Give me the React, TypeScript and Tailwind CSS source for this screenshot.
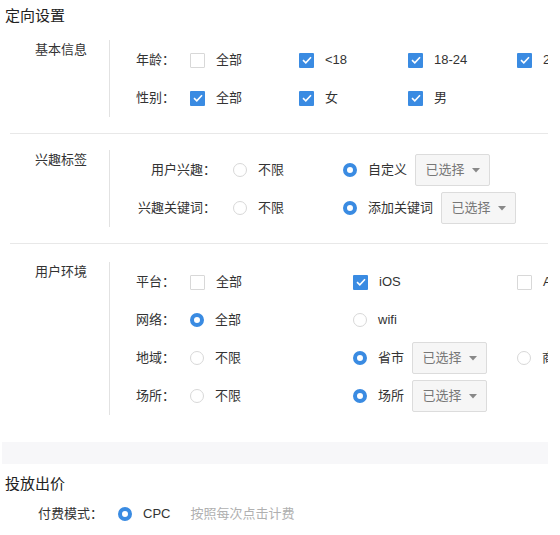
import type { ReactNode } from 'react';

function Check({ on }: { on?: boolean }) {
  if (on) {
    return (
      <span className="flex h-[15px] w-[15px] shrink-0 items-center justify-center rounded-[1px] bg-[#3a8be2]">
        <svg width="10" height="8" viewBox="0 0 10 8" fill="none">
          <path d="M1 4.2L3.8 6.8L9 1.2" stroke="white" strokeWidth="1.6" />
        </svg>
      </span>
    );
  }
  return <span className="h-[15px] w-[15px] shrink-0 rounded-[1px] border border-[#d8d8d8] bg-white" />;
}

function Radio({ on }: { on?: boolean }) {
  if (on) {
    return <span className="h-[14px] w-[14px] shrink-0 rounded-full border-[4px] border-[#3a8be2] bg-white" />;
  }
  return <span className="h-[14px] w-[14px] shrink-0 rounded-full border border-[#d8d8d8] bg-white" />;
}

function Opt({ kind, on, text, w, children }: { kind: 'c' | 'r'; on?: boolean; text: string; w?: string; children?: ReactNode }) {
  return (
    <div className={`flex shrink-0 items-center gap-[11px] ${w ?? ''}`}>
      {kind === 'c' ? <Check on={on} /> : <Radio on={on} />}
      <span className="whitespace-nowrap">{text}</span>
      {children}
    </div>
  );
}

function Picker() {
  return (
    <button className="-ml-[3px] flex h-[32px] w-[75px] items-center justify-center gap-[7px] rounded-[2px] border border-[#dcdcdc] bg-[#f6f6f6] text-[13px] text-[#777]">
      已选择
      <svg width="8" height="5" viewBox="0 0 8 5">
        <path d="M0 0H8L4 4.5Z" fill="#888" />
      </svg>
    </button>
  );
}

function Section({ title, top, children }: { title: string; top: string; children: ReactNode }) {
  return (
    <div className={`flex ${top}`}>
      <div className="w-[109px] shrink-0 pl-[35px] leading-[20px]">{title}</div>
      <div className="flex-1 border-l border-[#e2e2e2] pt-[1px]">{children}</div>
    </div>
  );
}

function Row({ label, lw, children }: { label: string; lw: string; children: ReactNode }) {
  return (
    <div className="flex h-[38px] items-center">
      <div className={`shrink-0 whitespace-nowrap ${lw}`}>{label}</div>
      {children}
    </div>
  );
}

export default function App() {
  return (
    <div
      className="h-[535px] w-[560px] overflow-hidden bg-white text-[13px] text-[#333]"
      style={{ fontFamily: '"Liberation Sans", "Noto Sans CJK SC", sans-serif' }}
    >
      <div className="w-[548px] overflow-hidden">
        <div className="flex h-[32px] items-center pl-[5px] text-[15px] text-[#222]">定向设置</div>

        <Section title="基本信息" top="mt-[8px]">
          <Row label="年龄：" lw="w-[80px] pl-[26px]">
            <Opt kind="c" text="全部" w="w-[109px]" />
            <Opt kind="c" on text="<18" w="w-[109px]" />
            <Opt kind="c" on text="18-24" w="w-[109px]" />
            <Opt kind="c" on text="25-30" />
          </Row>
          <Row label="性别：" lw="w-[80px] pl-[26px]">
            <Opt kind="c" on text="全部" w="w-[109px]" />
            <Opt kind="c" on text="女" w="w-[109px]" />
            <Opt kind="c" on text="男" w="w-[109px]" />
          </Row>
        </Section>

        <div className="ml-[10px] mt-[16px] h-px bg-[#e8e8e8]" />

        <Section title="兴趣标签" top="mt-[16px]">
          <Row label="用户兴趣：" lw="w-[123px] pr-[17px] text-right">
            <Opt kind="r" text="不限" w="w-[110px]" />
            <Opt kind="r" on text="自定义">
              <Picker />
            </Opt>
          </Row>
          <Row label="兴趣关键词：" lw="w-[123px] pr-[17px] text-right">
            <Opt kind="r" text="不限" w="w-[110px]" />
            <Opt kind="r" on text="添加关键词">
              <Picker />
            </Opt>
          </Row>
        </Section>

        <div className="ml-[10px] mt-[16px] h-px bg-[#e8e8e8]" />

        <Section title="用户环境" top="mt-[18px]">
          <Row label="平台：" lw="w-[80px] pl-[26px]">
            <Opt kind="c" text="全部" w="w-[163px]" />
            <Opt kind="c" on text="iOS" w="w-[164px]" />
            <Opt kind="c" text="Android" />
          </Row>
          <Row label="网络：" lw="w-[80px] pl-[26px]">
            <Opt kind="r" on text="全部" w="w-[163px]" />
            <Opt kind="r" text="wifi" w="w-[164px]" />
          </Row>
          <Row label="地域：" lw="w-[80px] pl-[26px]">
            <Opt kind="r" text="不限" w="w-[163px]" />
            <Opt kind="r" on text="省市" w="w-[164px]">
              <Picker />
            </Opt>
            <Opt kind="r" text="商圈" />
          </Row>
          <Row label="场所：" lw="w-[80px] pl-[26px]">
            <Opt kind="r" text="不限" w="w-[163px]" />
            <Opt kind="r" on text="场所" w="w-[164px]">
              <Picker />
            </Opt>
          </Row>
        </Section>

        <div className="ml-[2px] mt-[27px] h-[22px] bg-[#f7f7f9]" />

        <div className="flex h-[40px] items-center pl-[5px] text-[15px] text-[#222]">投放出价</div>
        <div className="flex h-[20px] items-center">
          <div className="w-[118px] shrink-0 whitespace-nowrap pl-[38px]">付费模式：</div>
          <Opt kind="r" on text="CPC" />
          <span className="ml-[20px] whitespace-nowrap text-[#b0b0b0]">按照每次点击计费</span>
        </div>
      </div>
    </div>
  );
}
